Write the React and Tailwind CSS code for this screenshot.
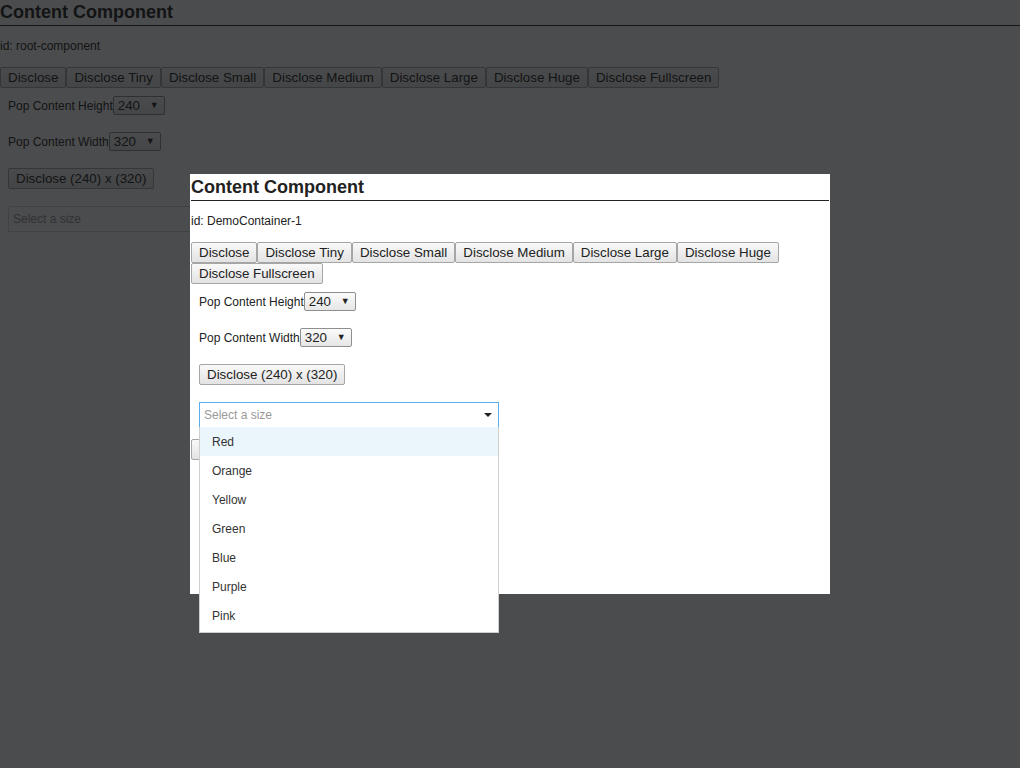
import React from "react";

const BTN =
  "h-[21px] px-[7px] border border-[#a6a6a6] rounded-[2px] bg-linear-to-b from-[#f9f9f9] to-[#e3e3e3] text-[13.33px] leading-[15px] text-[#222] whitespace-nowrap";

const BUTTONS = [
  "Disclose",
  "Disclose Tiny",
  "Disclose Small",
  "Disclose Medium",
  "Disclose Large",
  "Disclose Huge",
  "Disclose Fullscreen",
];

const COLORS = ["Red", "Orange", "Yellow", "Green", "Blue", "Purple", "Pink"];

function NativeSelect({ value }) {
  return (
    <div className="h-[19px] w-[52px] flex items-center justify-between pl-[4px] pr-[5px] border border-[#8f8f8f] rounded-[2px] bg-linear-to-b from-[#fbfbfb] to-[#e6e6e6] text-[13.33px] leading-[15px] text-[#222]">
      <span>{value}</span>
      <span className="text-[9px] leading-[9px]">▼</span>
    </div>
  );
}

function SizeSelect({ open }) {
  return (
    <div className="relative w-[300px]">
      <div
        className={
          open
            ? "h-[26px] flex items-center justify-between pl-[4px] pr-[6px] border border-[#5aafea] bg-white text-[12px] text-[#999]"
            : "h-[26px] flex items-center justify-between pl-[4px] pr-[6px] border border-[#d6d6d6] bg-white text-[12px] text-[#999]"
        }
      >
        <span>Select a size</span>
        <span className="w-0 h-0 border-l-[4px] border-r-[4px] border-t-[4px] border-l-transparent border-r-transparent border-t-[#222]" />
      </div>
      {open && (
        <div className="absolute left-0 top-[25px] w-full z-10 bg-white border border-[#cfcfcf] border-t-0 pb-[2px]">
          {COLORS.map((c, i) => (
            <div
              key={c}
              className={
                i === 0
                  ? "h-[29px] flex items-center pl-[12px] text-[12px] text-[#333] bg-[#ebf5fc]"
                  : "h-[29px] flex items-center pl-[12px] text-[12px] text-[#333]"
              }
            >
              {c}
            </div>
          ))}
        </div>
      )}
    </div>
  );
}

function ContentComponent({ id, open, showClose }) {
  return (
    <div className="flex flex-col items-stretch">
      <h2 className="text-[18px] leading-[24px] font-bold text-[#222] pb-[1px] border-b border-[#222]">
        Content Component
      </h2>
      <p className="mt-[13px] text-[12px] leading-[14px] text-[#222]">id: {id}</p>
      <div className="mt-[14px] flex flex-wrap">
        {BUTTONS.map((b) => (
          <button key={b} className={BTN}>
            {b}
          </button>
        ))}
      </div>
      <div className="pl-[8px] pt-[8px] flex flex-col items-start gap-[17px]">
        <div className="flex items-center">
          <span className="text-[12px] text-[#222]">Pop Content Height</span>
          <NativeSelect value="240" />
        </div>
        <div className="flex items-center">
          <span className="text-[12px] text-[#222]">Pop Content Width</span>
          <NativeSelect value="320" />
        </div>
        <button className={BTN}>Disclose (240) x (320)</button>
        <SizeSelect open={open} />
      </div>
      {showClose && (
        <div className="mt-[9px]">
          <button className={BTN}>Close</button>
        </div>
      )}
    </div>
  );
}

export default function App() {
  return (
    <div className="relative w-full h-[768px] overflow-hidden bg-white font-['Liberation_Sans',Arial,sans-serif]">
      <ContentComponent id="root-component" open={false} showClose={false} />
      <div className="absolute inset-0 bg-[rgba(15,16,18,0.75)]" />
      <div className="absolute left-[190px] top-[174px] w-[640px] h-[420px] bg-white p-px">
        <ContentComponent id="DemoContainer-1" open={true} showClose={true} />
      </div>
    </div>
  );
}
